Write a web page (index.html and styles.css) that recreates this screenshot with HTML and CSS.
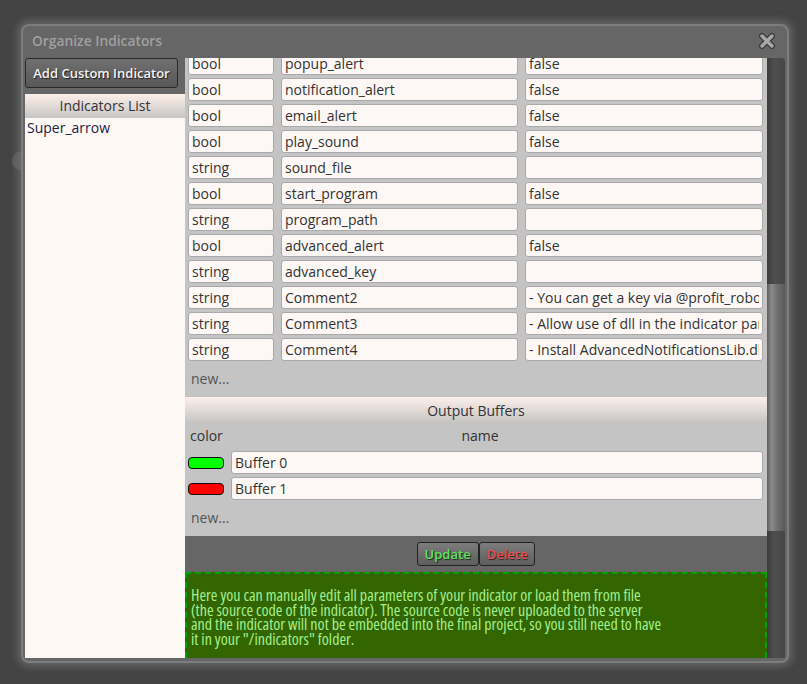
FILE: index.html
```html
<!DOCTYPE html>
<html lang="en">
<head>
    <meta charset="UTF-8">
    <meta name="viewport" content="width=device-width, initial-scale=1.0">
    <title>Organize Indicators</title>
    <link rel="stylesheet" href="styles.css">
</head>
<body>
    <div class="side-tab"></div>
    <div class="dialog">
        <div class="dialog-title">
            <span>Organize Indicators</span>
            <button class="close-btn" title="Close">
                <svg width="18" height="18" viewBox="0 0 18 18">
                    <path d="M4 4 L14 14 M14 4 L4 14" stroke="#3a3a3a" stroke-width="6" stroke-linecap="round" fill="none"/>
                    <path d="M4 4 L14 14 M14 4 L4 14" stroke="#a9a9a9" stroke-width="3.4" stroke-linecap="round" fill="none"/>
                </svg>
            </button>
        </div>
        <div class="dialog-body">
            <div class="left-col">
                <button class="add-btn">Add Custom Indicator</button>
                <div class="ind-list">
                    <div class="ind-list-head">Indicators List</div>
                    <div class="ind-item">Super_arrow</div>
                </div>
            </div>
            <div class="editor">
                <div class="editor-view">
                    <!-- scrolled down a bit, first row is cut by the view -->
                    <div class="editor-content">
                        <div class="params">
                            <input class="field" type="text" value="bool">
                            <input class="field" type="text" value="popup_alert">
                            <input class="field" type="text" value="false">
                            <input class="field" type="text" value="bool">
                            <input class="field" type="text" value="notification_alert">
                            <input class="field" type="text" value="false">
                            <input class="field" type="text" value="bool">
                            <input class="field" type="text" value="email_alert">
                            <input class="field" type="text" value="false">
                            <input class="field" type="text" value="bool">
                            <input class="field" type="text" value="play_sound">
                            <input class="field" type="text" value="false">
                            <input class="field" type="text" value="string">
                            <input class="field" type="text" value="sound_file">
                            <input class="field" type="text" value="">
                            <input class="field" type="text" value="bool">
                            <input class="field" type="text" value="start_program">
                            <input class="field" type="text" value="false">
                            <input class="field" type="text" value="string">
                            <input class="field" type="text" value="program_path">
                            <input class="field" type="text" value="">
                            <input class="field" type="text" value="bool">
                            <input class="field" type="text" value="advanced_alert">
                            <input class="field" type="text" value="false">
                            <input class="field" type="text" value="string">
                            <input class="field" type="text" value="advanced_key">
                            <input class="field" type="text" value="">
                            <input class="field" type="text" value="string">
                            <input class="field" type="text" value="Comment2">
                            <input class="field" type="text" value="- You can get a key via @profit_robots_bot">
                            <input class="field" type="text" value="string">
                            <input class="field" type="text" value="Comment3">
                            <input class="field" type="text" value="- Allow use of dll in the indicator parameters">
                            <input class="field" type="text" value="string">
                            <input class="field" type="text" value="Comment4">
                            <input class="field" type="text" value="- Install AdvancedNotificationsLib.dll">
                        </div>
                        <div class="new-row">new...</div>

                        <div class="section-head">Output Buffers</div>
                        <div class="buf-head">
                            <span>color</span>
                            <span class="buf-head-name">name</span>
                        </div>
                        <div class="buffers">
                            <span class="swatch swatch-green"></span>
                            <input class="field" type="text" value="Buffer 0">
                            <span class="swatch swatch-red"></span>
                            <input class="field" type="text" value="Buffer 1">
                        </div>
                        <div class="new-row">new...</div>

                        <div class="actions">
                            <button class="act-btn act-update">Update</button>
                            <button class="act-btn act-delete">Delete</button>
                        </div>
                        <div class="note">
                            Here you can manually edit all parameters of your indicator or load them from file<br>
                            (the source code of the indicator). The source code is never uploaded to the server<br>
                            and the indicator will not be embedded into the final project, so you still need to have<br>
                            it in your "/indicators" folder.
                        </div>
                    </div>
                </div>
                <div class="scrollbar"><div class="thumb"></div></div>
            </div>
        </div>
    </div>
</body>
</html>
```

FILE: styles.css
```css
body {
    margin: 0;
    padding: 24px 0 0 21px;
    height: 684px;
    box-sizing: border-box;
    overflow: hidden;
    background-color: #444;
    font-family: "Open Sans", "Noto Sans", sans-serif;
    font-size: 14px;
    color: #333;
}
button {
    font-family: "Open Sans", "Noto Sans", sans-serif;
    cursor: pointer;
}
.side-tab {
    position: absolute;
    left: 12px;
    top: 151px;
    width: 20px;
    height: 20px;
    border-radius: 50%;
    background: #5a5a5a;
}
.dialog {
    position: relative;
    width: 768px;
    height: 639px;
    box-sizing: border-box;
    display: flex;
    flex-direction: column;
    padding: 0 2px 3px;
    background: #666;
    border: 2px solid #7d7d7d;
    border-radius: 8px;
    box-shadow: 0 0 7px 4px rgba(118, 118, 118, 0.6);
}
.dialog-title {
    height: 32px;
    display: flex;
    align-items: center;
    justify-content: space-between;
    padding: 0 9px 3px 7px;
    box-sizing: border-box;
    color: #a0a0a0;
    font-size: 13.8px;
    font-weight: 600;
}
.close-btn {
    background: none;
    border: none;
    padding: 0;
    width: 18px;
    height: 18px;
    display: flex;
}
.dialog-body {
    flex: 1;
    display: flex;
    min-height: 0;
}
.left-col {
    width: 160px;
    display: flex;
    flex-direction: column;
}
.add-btn {
    width: 153px;
    height: 30px;
    margin-bottom: 6px;
    padding: 0;
    border: 1px solid #2a2a2a;
    border-radius: 3px;
    background: linear-gradient(#707070, #585858);
    color: #f2f2f2;
    font-size: 13px;
    font-weight: 600;
    text-shadow: 1px 1px 1px #1e1e1e;
}
.ind-list {
    flex: 1;
    background: #fdf8f4;
}
.ind-list-head {
    height: 24px;
    line-height: 24px;
    text-align: center;
    background: linear-gradient(#fdeee8, #c6c6c6);
}
.ind-item {
    padding: 0 2px;
    line-height: 20px;
    color: #1c1c46;
}
.editor {
    flex: 1;
    display: flex;
}
.editor-view {
    flex: 1;
    overflow: hidden;
    background: #c4c4c4;
}
.editor-content {
    margin-top: -6px;
}
.params {
    display: grid;
    grid-template-columns: 86px 237px 238px;
    gap: 3px 7px;
    padding-left: 3px;
}
.field {
    width: 100%;
    height: 23px;
    box-sizing: border-box;
    margin: 0;
    padding: 0 3px 1px;
    border: 1px solid #a9a9a9;
    border-radius: 3px;
    background: #fdf8f5;
    font-family: "Open Sans", "Noto Sans", sans-serif;
    font-size: 14px;
    color: #333;
}
.new-row {
    height: 36px;
    line-height: 36px;
    padding-left: 6px;
    color: #555;
}
.section-head {
    height: 26px;
    line-height: 27px;
    text-align: center;
    background: linear-gradient(#fdf0ea, #c4c4c4);
}
.buf-head {
    display: grid;
    grid-template-columns: 36px 1fr;
    column-gap: 7px;
    height: 25px;
    line-height: 25px;
    padding: 0 40px 0 5px;
}
.buf-head-name {
    text-align: center;
}
.buffers {
    display: grid;
    grid-template-columns: 36px 1fr;
    gap: 3px 7px;
    align-items: center;
    padding: 3px 4px 0 3px;
}
.swatch {
    height: 10px;
    border: 1px solid #111;
    border-radius: 4px;
}
.swatch-green {
    background: #00ff00;
}
.swatch-red {
    background: #ff0000;
}
.actions {
    height: 36px;
    box-sizing: border-box;
    padding-top: 6px;
    display: flex;
    justify-content: center;
    background: #666;
}
.act-btn {
    height: 24px;
    padding: 0 7px;
    border: 1px solid #222;
    border-radius: 3px;
    background: linear-gradient(#7c7c7c, #5e5e5e);
    font-size: 13px;
    font-weight: 600;
    text-shadow: 1px 1px 1px #222;
}
.act-update {
    color: #5ce35c;
}
.act-delete {
    color: #f25050;
}
.note {
    padding: 14px 4px 20px;
    border: 2px dashed #00a300;
    background: #336600;
    color: #a3f08f;
    font-size: 16px;
    font-weight: 500;
    line-height: 14.5px;
    font-stretch: condensed;
}
.scrollbar {
    width: 18px;
    background: linear-gradient(to right, #3c3c3c, #4e4e4e 40%, #464646);
    border-radius: 0 4px 0 0;
}
.thumb {
    margin-top: 226px;
    height: 247px;
    background: linear-gradient(to right, #5e5e5e, #8a8a8a 25%, #6e6e6e 60%, #595959);
}
```
